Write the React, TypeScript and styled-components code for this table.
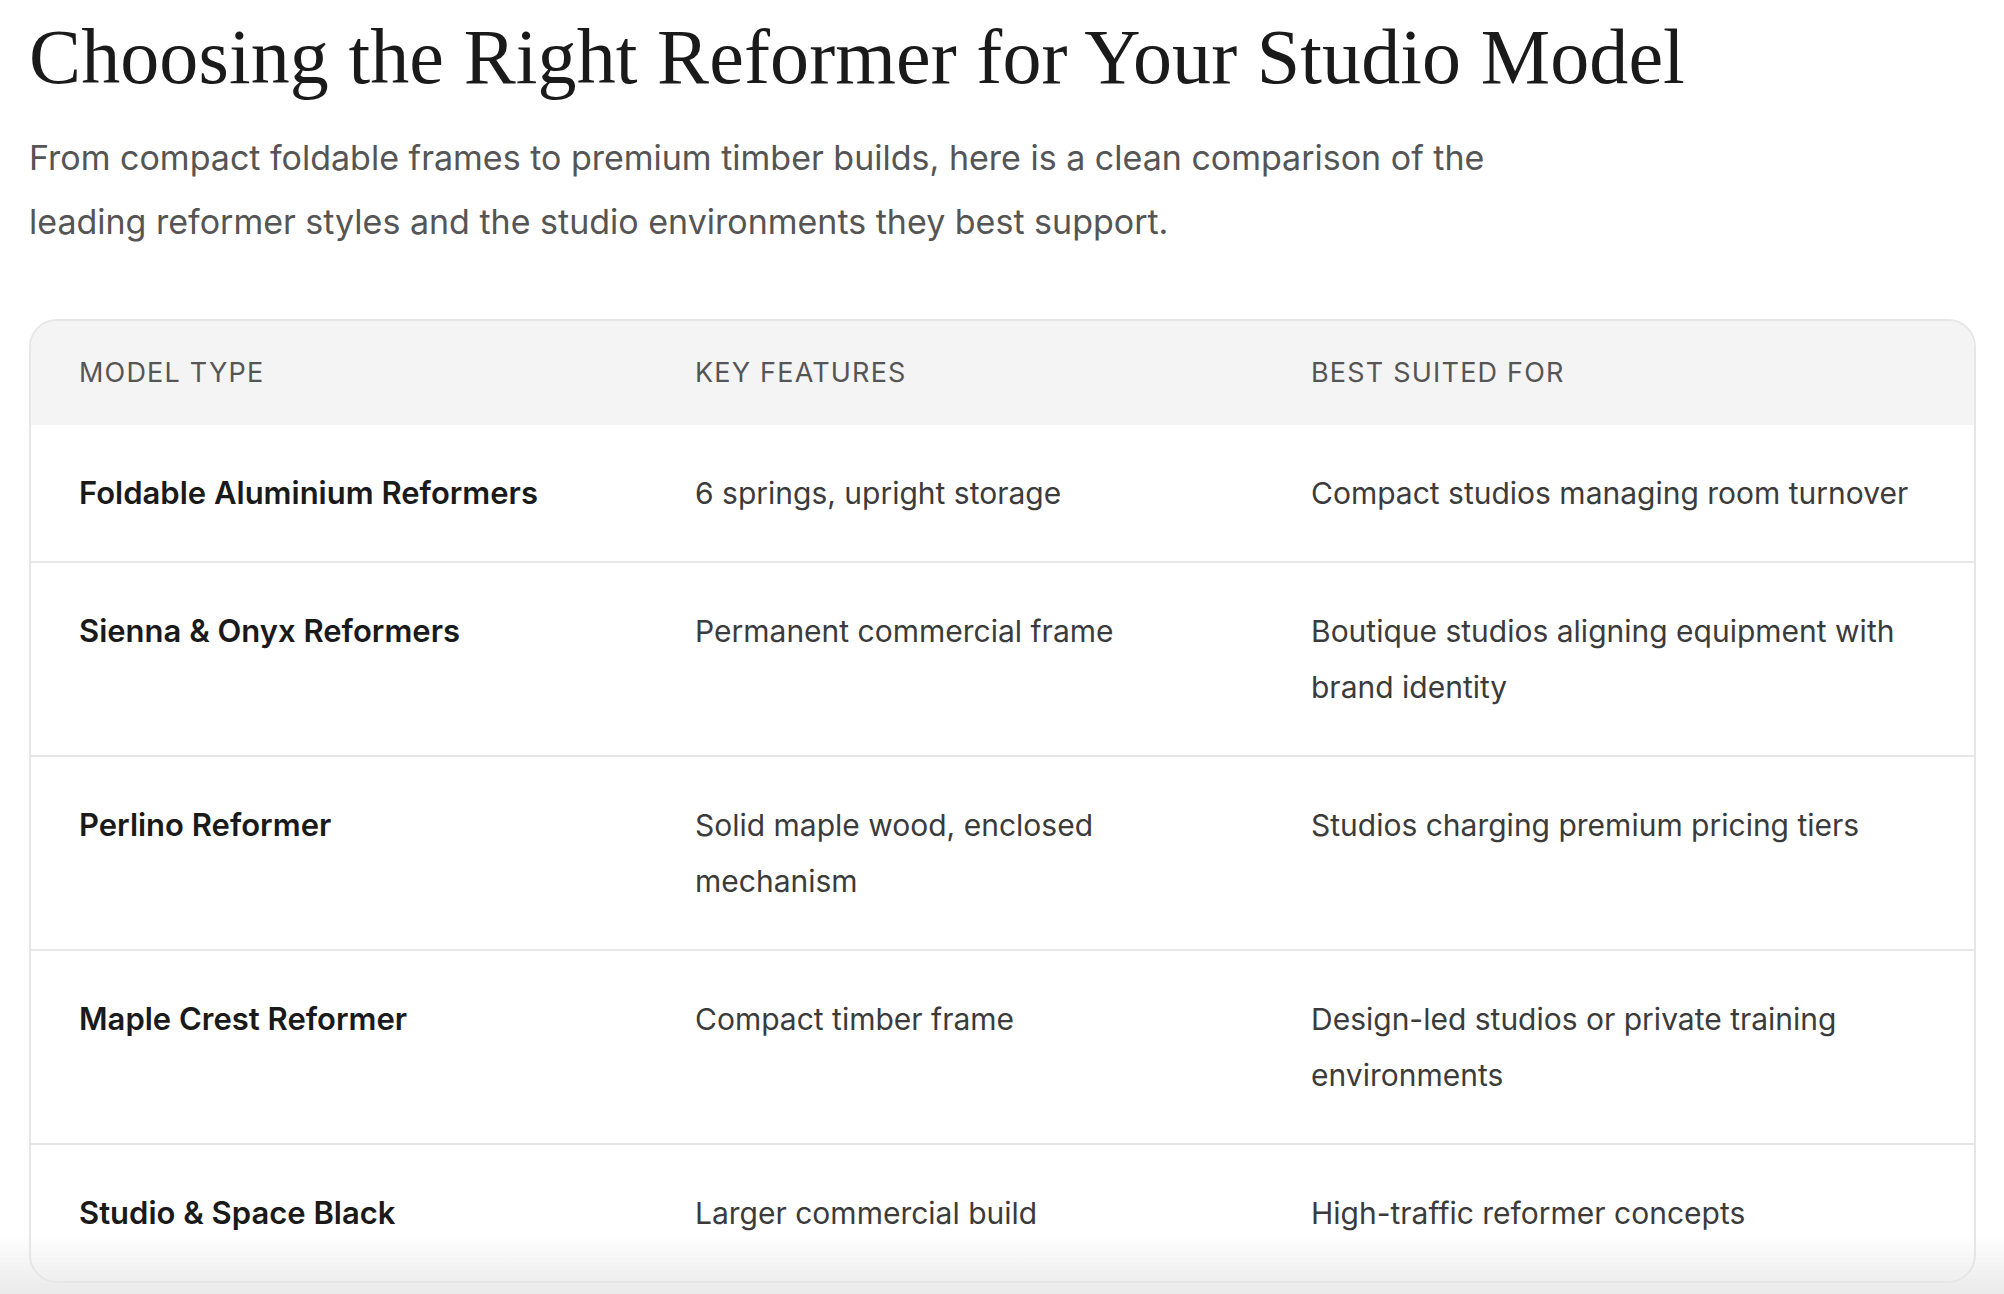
import React from 'react';
import styled, { createGlobalStyle } from 'styled-components';

// Comparison data
const rows = [
  {
    model: 'Foldable Aluminium Reformers',
    features: '6 springs, upright storage',
    suited: 'Compact studios managing room turnover',
  },
  {
    model: 'Sienna & Onyx Reformers',
    features: 'Permanent commercial frame',
    suited: 'Boutique studios aligning equipment with brand identity',
  },
  {
    model: 'Perlino Reformer',
    features: 'Solid maple wood, enclosed mechanism',
    suited: 'Studios charging premium pricing tiers',
  },
  {
    model: 'Maple Crest Reformer',
    features: 'Compact timber frame',
    suited: 'Design-led studios or private training environments',
  },
  {
    model: 'Studio & Space Black',
    features: 'Larger commercial build',
    suited: 'High-traffic reformer concepts',
  },
];

const GlobalStyle = createGlobalStyle`
  html, body {
    margin: 0;
    padding: 0;
    background: #ffffff;
  }
  body {
    font-family: Inter, "Noto Sans", Arial, sans-serif;
    -webkit-font-smoothing: antialiased;
  }
`;

const Page = styled.main`
  padding: 10px 28px 40px 29px;
`;

const Heading = styled.h1`
  margin: 0;
  font-family: "Liberation Serif", "Times New Roman", serif;
  font-weight: 400;
  font-size: 78px;
  line-height: 1.2;
  color: #1a1a1a;
  letter-spacing: 0.1px;
`;

const Intro = styled.p`
  margin: 22px 0 0;
  max-width: 1500px;
  font-size: 34px;
  line-height: 64px;
  color: #555555;
`;

const TableFrame = styled.div`
  margin-top: 65px;
  border: 2px solid #e6e6e6;
  border-radius: 28px;
  overflow: hidden;
  background: #ffffff;
`;

const Table = styled.table`
  width: 100%;
  border-collapse: collapse;
  table-layout: fixed;
`;

const HeadRow = styled.tr`
  background: #f4f4f4;
`;

const HeadCell = styled.th<{ $w?: number }>`
  width: ${(p) => (p.$w ? `${p.$w}px` : 'auto')};
  text-align: left;
  padding: 0 50px 0 48px;
  height: 104px;
  font-size: 27px;
  font-weight: 400;
  letter-spacing: 1.2px;
  text-transform: uppercase;
  color: #555555;
`;

const Row = styled.tr<{ $first?: boolean }>`
  border-top: ${(p) => (p.$first ? 'none' : '2px solid #e6e6e6')};
`;

const Cell = styled.td<{ $strong?: boolean }>`
  vertical-align: top;
  padding: 40px 50px 40px 48px;
  font-size: ${(p) => (p.$strong ? '31px' : '30px')};
  line-height: 56px;
  font-weight: ${(p) => (p.$strong ? 600 : 400)};
  color: ${(p) => (p.$strong ? '#1a1a1a' : '#3b3b3b')};
`;

const BottomFade = styled.div`
  position: fixed;
  left: 0;
  right: 0;
  bottom: 0;
  height: 60px;
  pointer-events: none;
  background: linear-gradient(to bottom, rgba(236, 236, 236, 0), rgba(230, 230, 230, 0.85));
`;

export default function App() {
  return (
    <>
      <GlobalStyle />
      <Page>
        <Heading>Choosing the Right Reformer for Your Studio Model</Heading>
        <Intro>
          From compact foldable frames to premium timber builds, here is a clean comparison of the
          leading reformer styles and the studio environments they best support.
        </Intro>
        <TableFrame>
          <Table>
            <thead>
              <HeadRow>
                <HeadCell $w={518}>Model Type</HeadCell>
                <HeadCell $w={518}>Key Features</HeadCell>
                <HeadCell>Best Suited For</HeadCell>
              </HeadRow>
            </thead>
            <tbody>
              {rows.map((row, index) => (
                <Row key={index} $first={index === 0}>
                  <Cell $strong>{row.model}</Cell>
                  <Cell>{row.features}</Cell>
                  <Cell>{row.suited}</Cell>
                </Row>
              ))}
            </tbody>
          </Table>
        </TableFrame>
      </Page>
      <BottomFade />
    </>
  );
}
